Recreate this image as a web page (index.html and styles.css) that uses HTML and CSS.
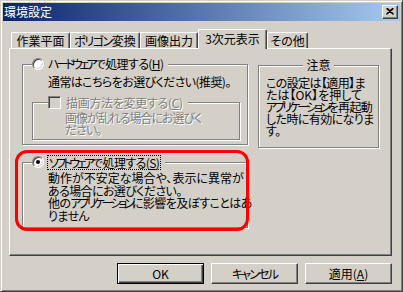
FILE: index.html
```html
<!DOCTYPE html>
<html lang="ja">
<head>
<meta charset="utf-8">
<title>環境設定</title>
<link rel="stylesheet" href="styles.css">
</head>
<body>
<div class="window">
  <div class="titlebar">
    <span class="title">環境設定</span>
    <div class="close">
      <svg width="8" height="7" viewBox="0 0 8 7"><path d="M0.5 0.5 L7.5 6.5 M1.5 0.5 L7.5 5.8 M7.5 0.5 L0.5 6.5 M6.5 0.5 L0.5 5.8" stroke="#000" stroke-width="1.1" fill="none"/></svg>
    </div>
  </div>
  <div class="tabs">
    <div class="tab t1">作業平面</div>
    <div class="tab t2"><span class="kana">ポリゴン</span>変換</div>
    <div class="tab t3">画像出力</div>
    <div class="tab t4 selected">3次元表示</div>
    <div class="tab t5">その他</div>
  </div>
  <div class="panel">
    <div class="left">
      <div class="group hw">
        <div class="gtitle"><span class="radio"></span><span class="label"><span class="kana">ハードウェア</span>で処理する(<u>H</u>)</span></div>
        <div class="text hwtext">通常はこちらをお選びください(推奨)。</div>
        <div class="group inner">
          <div class="gtitle ctitle"><span class="check"></span><span class="label disabled">描画方法を変更する(<u>C</u>)</span></div>
          <div class="text disabled innertext">画像が乱れる場合にお選びく<br>ださい。</div>
        </div>
      </div>
      <div class="group sw">
        <div class="gtitle"><span class="radio checked"></span><span class="label focus"><span class="kana">ソフトウェア</span>で処理する(<u>S</u>)</span></div>
        <div class="text swtext"><span class="wide">動作が不安定な場合や、表示に異常が</span><br>ある場合にお選びください。<br>他の<span class="kana">アプリケーション</span>に影響を及ぼすことはあ<br>りません</div>
      </div>
    </div>
    <div class="group notice">
      <div class="ntitle">注意</div>
      <div class="text ntext">この設定は【適用】ま<br><span class="wide">たは【OK】を押して</span><br><span class="kana">アプリケーション</span>を再起動<br>した時に有効になりま<br>す。</div>
    </div>
  </div>
  <div class="buttons">
    <div class="btn default">OK</div>
    <div class="btn"><span class="kana2">キャンセル</span></div>
    <div class="btn">適用(<u>A</u>)</div>
  </div>
  <div class="highlight"></div>
</div>
</body>
</html>
```
FILE: styles.css
```css
html, body {
  margin: 0;
  padding: 0;
  background: #d4d0c8;
}
body {
  font-family: "Noto Sans CJK JP", "Noto Sans", sans-serif;
  font-size: 12px;
  line-height: 12px;
  color: #000;
  font-feature-settings: "palt";
  letter-spacing: -0.6px;
}
.kana { letter-spacing: -3px; }
.kana2 { letter-spacing: -1.8px; }
.wide { letter-spacing: 0; }
.window {
  position: relative;
  width: 403px;
  height: 292px;
  box-sizing: border-box;
  border: 1px solid;
  border-color: #d4d0c8 #404040 #404040 #d4d0c8;
  box-shadow: inset 1px 1px #fff, inset -1px -1px #808080;
  padding: 2px;
  background: #d4d0c8;
  display: flex;
  flex-direction: column;
}
.titlebar {
  height: 18px;
  flex: none;
  display: flex;
  align-items: center;
  padding: 0 2px 0 1px;
  background: linear-gradient(to right, #0a246a, #a6caf0);
}
.title {
  color: #fff;
  font-size: 12px;
  line-height: 12px;
  letter-spacing: 0;
}
.close {
  margin-left: auto;
  width: 16px;
  height: 14px;
  box-sizing: border-box;
  background: #d4d0c8;
  border: 1px solid;
  border-color: #fff #404040 #404040 #fff;
  box-shadow: inset -1px -1px #808080;
  display: flex;
  align-items: center;
  justify-content: center;
  padding: 0 1px 1px 0;
}
.close svg { display: block; }
.tabs {
  height: 28px;
  flex: none;
  display: flex;
  align-items: flex-end;
  padding-left: 8px;
}
.tab {
  height: 16px;
  box-sizing: border-box;
  margin-bottom: 1px;
  border-top: 1px solid #fff;
  border-left: 1px solid #fff;
  border-right: 1px solid #404040;
  box-shadow: inset -1px 0 #808080;
  border-radius: 2px 2px 0 0;
  display: flex;
  align-items: center;
  justify-content: center;
  white-space: nowrap;
  padding-top: 1px;
  letter-spacing: 0;
}
.t1 { width: 59px; }
.t2 { width: 70px; }
.t3 { width: 58px; }
.t4 { width: 69px; }
.t5 { width: 41px; }
.t2 .kana { letter-spacing: -1.5px; }
.tab.selected {
  height: 20px;
  margin-bottom: 0;
  position: relative;
  z-index: 2;
  background: #d4d0c8;
  padding-top: 0;
  padding-bottom: 2px;
}
.panel {
  flex: none;
  margin-top: -1px;
  margin-left: 6px;
  width: 383px;
  height: 208px;
  box-sizing: border-box;
  border: 1px solid;
  border-color: #fff #404040 #404040 #fff;
  box-shadow: inset -1px -1px #808080;
  display: flex;
  align-items: flex-start;
  padding: 15px 0 0 12px;
}
.left {
  width: 226px;
  display: flex;
  flex-direction: column;
}
.group {
  box-sizing: border-box;
  border: 1px solid #808080;
  box-shadow: inset 1px 1px #fff, 1px 1px #fff;
  display: flex;
  flex-direction: column;
  align-items: flex-start;
}
.gtitle {
  height: 14px;
  margin-top: -8px;
  margin-left: 9px;
  padding-right: 5px;
  background: #d4d0c8;
  display: flex;
  align-items: center;
  gap: 4px;
  white-space: nowrap;
}
.text {
  white-space: nowrap;
}
.disabled {
  color: #808080;
  text-shadow: 1px 1px 0 #fff;
}
.radio {
  width: 12px;
  height: 12px;
  box-sizing: border-box;
  border-radius: 50%;
  border: 1px solid;
  border-color: #808080 #fff #fff #808080;
  box-shadow: inset 1px 1px #404040, inset -1px -1px #d4d0c8;
  background: #fff;
  display: flex;
  align-items: center;
  justify-content: center;
  flex: none;
}
.radio.checked::after {
  content: "";
  width: 4px;
  height: 4px;
  border-radius: 50%;
  background: #000;
}
.check {
  width: 13px;
  height: 13px;
  box-sizing: border-box;
  border: 1px solid;
  border-color: #808080 #fff #fff #808080;
  box-shadow: inset 1px 1px #404040, inset -1px -1px #d4d0c8;
  background: #d4d0c8;
  flex: none;
}
.focus {
  outline: 1px dotted #000;
  outline-offset: 0;
  padding: 0 1px;
  line-height: 13px;
}
.hw {
  width: 226px;
  height: 81px;
}
.hwtext {
  margin-top: 5px;
  padding-left: 25px;
}
.inner {
  width: 208px;
  height: 38px;
  margin-top: 14px;
  margin-left: 9px;
}
.ctitle {
  height: 13px;
  margin-top: -7px;
  margin-left: 15px;
  gap: 5px;
}
.ctitle .label { letter-spacing: -0.3px; }
.innertext {
  margin-top: 3px;
  padding-left: 32px;
  letter-spacing: -1px;
}
.sw {
  width: 226px;
  height: 66px;
  margin-top: 17px;
}
.swtext {
  margin-top: 3px;
  padding-left: 25px;
  line-height: 12.6px;
}
.notice {
  width: 121px;
  height: 83px;
  margin-left: 10px;
  margin-top: 1px;
  align-items: stretch;
}
.ntitle {
  align-self: center;
  height: 13px;
  margin-top: -8px;
  padding: 0 3px;
  background: #d4d0c8;
  display: flex;
  align-items: center;
  letter-spacing: 0;
}
.ntext {
  margin-top: 6px;
  padding-left: 7px;
}
.buttons {
  flex: none;
  margin-top: 7px;
  margin-left: 6px;
  width: 383px;
  display: flex;
  justify-content: flex-end;
  gap: 7px;
}
.btn {
  width: 87px;
  height: 21px;
  box-sizing: border-box;
  border: 1px solid;
  border-color: #fff #404040 #404040 #fff;
  box-shadow: inset -1px -1px #808080;
  display: flex;
  align-items: center;
  justify-content: center;
  white-space: nowrap;
  letter-spacing: 0;
}
.btn.default {
  border: 1px solid #000;
  box-shadow: inset 1px 1px #fff, inset -1px -1px #404040, inset -2px -2px #808080;
}
.highlight {
  position: absolute;
  left: 14px;
  top: 149px;
  width: 234px;
  height: 81px;
  box-sizing: border-box;
  border: 3px solid #ff0000;
  border-radius: 12px;
  pointer-events: none;
}
```
